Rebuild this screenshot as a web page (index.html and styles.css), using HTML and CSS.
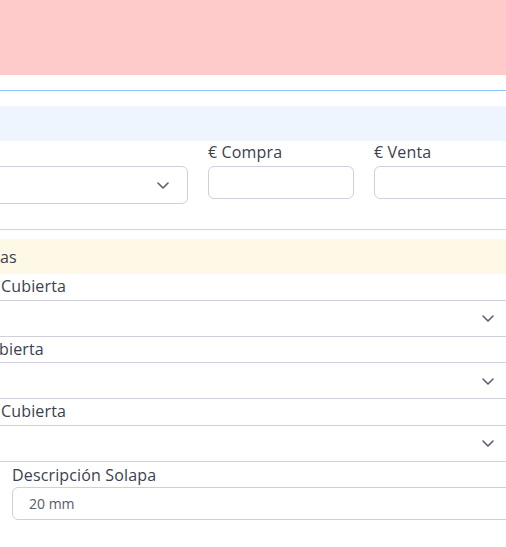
FILE: index.html
```html
<!DOCTYPE html>
<html lang="es">
<head>
<meta charset="utf-8">
<link rel="stylesheet" href="styles.css">
</head>
<body>
<div class="page">
  <div class="alert-pink"></div>
  <div class="rule-blue"></div>
  <div class="band-blue"></div>
  <div class="price-row">
    <div class="col col-select">
      <div class="label label-empty">&nbsp;</div>
      <div class="select select-rounded">
        <svg class="chev" viewBox="0 0 12 7" width="12" height="7"><path d="M1 1l5 5 5-5" fill="none" stroke="#5b606e" stroke-width="1.6" stroke-linecap="round" stroke-linejoin="round"/></svg>
      </div>
    </div>
    <div class="col col-input">
      <div class="label">€ Compra</div>
      <div class="input"></div>
    </div>
    <div class="col col-input col-last">
      <div class="label">€ Venta</div>
      <div class="input input-open"></div>
    </div>
  </div>
  <div class="rule-yellow"></div>
  <div class="band-yellow"><span class="band-text">as</span></div>
  <div class="fields">
    <div class="field">
      <div class="label label-cut1">Cubierta</div>
      <div class="select select-wide">
        <svg class="chev" viewBox="0 0 12 7" width="12" height="7"><path d="M1 1l5 5 5-5" fill="none" stroke="#5b606e" stroke-width="1.6" stroke-linecap="round" stroke-linejoin="round"/></svg>
      </div>
    </div>
    <div class="field">
      <div class="label label-cut2">bierta</div>
      <div class="select select-wide">
        <svg class="chev" viewBox="0 0 12 7" width="12" height="7"><path d="M1 1l5 5 5-5" fill="none" stroke="#5b606e" stroke-width="1.6" stroke-linecap="round" stroke-linejoin="round"/></svg>
      </div>
    </div>
    <div class="field">
      <div class="label label-cut1">Cubierta</div>
      <div class="select select-wide">
        <svg class="chev" viewBox="0 0 12 7" width="12" height="7"><path d="M1 1l5 5 5-5" fill="none" stroke="#5b606e" stroke-width="1.6" stroke-linecap="round" stroke-linejoin="round"/></svg>
      </div>
    </div>
    <div class="field field-desc">
      <div class="label">Descripción Solapa</div>
      <div class="input input-desc"><span class="value">20 mm</span></div>
    </div>
  </div>
</div>
</body>
</html>
```

FILE: styles.css
```css
* { box-sizing: border-box; }
html, body { margin: 0; padding: 0; background: #fff; }
body {
  width: 506px;
  height: 547px;
  overflow: hidden;
  font-family: "Open Sans", "Liberation Sans", sans-serif;
  color: #3b3f4e;
}
.page { width: 506px; }

.alert-pink { height: 75px; background: #ffcaca; }
.rule-blue { margin-top: 15px; height: 1px; background: #8ec4fb; }
.band-blue { margin-top: 15px; height: 35px; background: #eef5ff; }

.label {
  font-size: 16px;
  line-height: 22px;
  white-space: nowrap;
  letter-spacing: 0.15px;
}

.price-row {
  display: flex;
  gap: 20px;
  align-items: flex-start;
}
.col { display: flex; flex-direction: column; gap: 3px; }
.col-select { flex: 0 0 188px; }
.col-input { flex: 0 0 146px; }
.col-last { flex: 0 0 160px; }

.select {
  position: relative;
  height: 37px;
  border: 1px solid #cfd0dc;
  background: #fff;
}
.select-rounded {
  margin-left: -20px;
  border-radius: 6px;
  height: 38px;
}
.select-wide {
  margin: 0 -10px;
  border-radius: 6px;
  height: 37px;
}
.chev {
  position: absolute;
  top: 50%;
  margin-top: -3px;
}
.select-rounded .chev { right: 18px; }
.select-wide .chev { right: 21px; }

.input {
  height: 33px;
  border: 1px solid #cfd0dc;
  border-radius: 6px;
  background: #fff;
}
.input-open { margin-right: -40px; }

.rule-yellow { margin-top: 25px; height: 1px; background: #ffd75e; }
.band-yellow {
  margin-top: 9px;
  height: 35px;
  background: #fef9e6;
  display: flex;
  align-items: center;
  font-size: 16px;
}

.fields { display: flex; flex-direction: column; }
.field { display: flex; flex-direction: column; }
.field .label { line-height: 25.5px; }
.label-cut1 { padding-left: 1px; }
.label-cut2 { margin-left: -1px; }

.field-desc { padding-left: 12px; padding-top: 2px; }
.field-desc .label { line-height: 23px; }
.input-desc {
  height: 33px;
  margin-right: -20px;
  display: flex;
  align-items: center;
  padding-left: 16px;
}
.value { font-size: 14px; color: #565b69; }
```
